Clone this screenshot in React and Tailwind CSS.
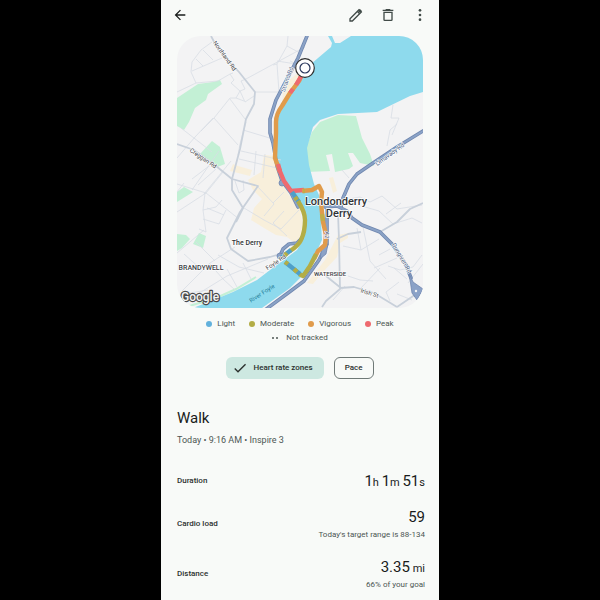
import React from "react";

const zones = [
  { label: "Light", color: "bg-[#62b1dc]" },
  { label: "Moderate", color: "bg-[#b3ad46]" },
  { label: "Vigorous", color: "bg-[#e09b4b]" },
  { label: "Peak", color: "bg-[#ee6a6f]" },
];

const minorRoads = [
  "M177 92L196 83L218 81L230 74L233 73M196 83L191 72L192 62L201 50L212 42M192 71L222 58M196 59L203 66M203 50L213 60M230 74L234 80L231 83L240 91L245 89L241 81L246 79L305 47M273 65L277 64L279 92L255 92M277 64L287 46L288 36M287 46L300 53M277 61L296 64M240 91L236 98L230 98L214 118L201 131M240 91L245 102L254 96M244 101L236 98M230 99L245 119M214 118L238 145",
  "M181 128L212 152M177 158L195 137L213 118M192 190L219 151M204 194L231 161M184 183L177 192M192 179L213 163M198 185L216 169M206 193L177 184M206 193L223 172M206 193L239 219M205 193L203 210L216 207L222 200M203 219L219 224L226 210M207 208L224 215M177 212L206 193M246 122L240 144L238 155M243 130L273 139M241 151L281 160M239 159L277 168M256 151L254 175M265 154L263 178M235 181L239 193L244 190L243 180M244 208L264 220L281 229L299 210M258 187L274 204L264 216M273 203L284 192M284 211L273 223L287 236",
  "M203 210L206 232L199 229M177 253L204 230M182 291L210 263L235 247M209 263L223 279L235 290M218 255L239 267L264 273M227 269L237 287M243 263L251 279M184 254L202 270M196 242L215 261M183 294L208 290M188 300L227 276L268 259",
  "M392 135L399 118L391 118L393 105M387 146L390 130L397 124M342 170L349 178M344 200L360 197L370 202L382 196L397 209L422 205M358 205L379 211L393 224L412 218L422 223M386 214L401 203M357 228L361 250L343 246M361 250L379 239M363 227L370 261L386 279M379 255L390 249M374 268L397 258M360 289L380 268M348 276L360 280L373 281M333 300L345 286M388 266L400 270L413 267L422 255M399 282L386 292L390 301M407 279L394 268M397 294L412 300M290 61L299 65M423 264L408 283",
];

const roads = [
  "M211 36L219 51L239 72L255 92L254 104L246 119L240 149L232 179L232 190L243 208L236 222",
  "M177 144L194 150L216 166L232 179L258 186L240 212L227 238L231 249L248 261L270 257L284 253",
  "M338 213L339 240L340 289L326 301L322 307",
  "M340 288L354 287L374 293L397 307M397 307L422 290M380 232L397 222L410 209L423 203",
  "M326 276L341 288M337 239L348 234L361 232",
];

const highways = [
  "M307 36L298 58L286 81L276 100L270 119L270 133L273 143L277 166L282 181L291 193L298 207",
  "M423 131L397 147L373 163L357 174L349 184L343 198L341 207",
  "M325 207L337 206L347 211L352 218L362 225L380 232L393 245L406 265L411 278",
  "M327 207L327 244L319 260L304 281L288 293L265 310",
  "M302 238L297 243L289 244L283 249L280 256",
];

function RouteMap() {
  return (
    <svg
      viewBox="177 36 246 272"
      role="img"
      aria-label="Route map"
      className="block w-full rounded-[24px] bg-[#f3f3f4] font-['Roboto',sans-serif]"
    >
      {/* parks */}
      <g fill="#c3f0d5">
        <path d="M177 98L198 84L213 82L220 80L222 84L208 94L206 100L195 108L189 122L184 130L177 126Z" />
        <path d="M200 154L212 141L220 147L225 164L215 168Z" />
        <path d="M177 192L184 187L193 192L177 202Z" />
        <path d="M177 234L186 235L190 239L182 248L177 251Z" />
        <path d="M193 244L199 233L206 236L203 248Z" />
        <path d="M306 172L306 148L312 132L320 122L338 115L356 116L362 138L370 154L374 166L360 163L353 153L348 153L353 166L349 169L335 172L332 154L326 155L330 171Z" />
      </g>
      <path
        d="M186 307L216 298L236 289L256 277"
        fill="none"
        stroke="#c3f0d5"
        strokeWidth="2"
      />
      {/* commercial areas */}
      <g fill="#f8efdb">
        <path d="M233 164L238 166L252 170L250 176L238 173L230 171Z" />
        <path d="M264 155L275 156L280 178L289 195L300 209L304 232L295 243L287 237L276 235L264 228L251 220L254 208L262 199L253 190L248 180L261 172Z" />
        <path d="M283 85L304 68L307 74L296 93L282 112Z" />
        <path d="M329 178L333 177L337 191L333 193Z" />
        <path d="M338 235L348 233L348 238L340 243L337 257L322 273L313 284L307 283L325 260Z" />
      </g>
      {/* river */}
      <path
        fill="#8edaed"
        d="M328 36L332 36L335 43L340 43L351 36L423 36L423 92L410 96L377 112L338 114L320 120L313 127L307 148L309 165L314 184L319 195L321 220L322 240L316 253L307 271L290 288L262 308L193 308L216 299L233 292L257 280L270 270L285 259L297 250L303 240L305 226L302 211L292 193L283 182L277 166L275 145L276 122L283 106L300 82L311 64L331 47L332 43Z"
      />

      <g fill="none" stroke="#d8dde5" strokeWidth="0.8" strokeLinejoin="round">
        {minorRoads.map((d, idx) => (
          <path key={idx} d={d} />
        ))}
      </g>
      <g fill="none" stroke="#c8d0da" strokeWidth="1.8" strokeLinejoin="round">
        {roads.map((d, idx) => (
          <path key={idx} d={d} />
        ))}
      </g>
      <g fill="none" strokeLinejoin="round" strokeLinecap="round">
        {highways.map((d, idx) => (
          <path key={idx} d={d} stroke="#7087af" strokeWidth="3.6" />
        ))}
        {highways.map((d, idx) => (
          <path key={idx} d={d} stroke="#8aa2c6" strokeWidth="2" />
        ))}
      </g>
      <g fill="#8ba2c7" stroke="#7087af" strokeWidth="0.8">
        <path d="M409 273L413 282L423 289L417 300L412 293Z" />
        <circle cx="282" cy="183" r="3" />
        <circle cx="280" cy="256" r="3" />
        <path d="M322 246L328 244L326 254L320 259Z" />
      </g>
      <circle cx="416" cy="291" r="1.2" fill="#f3f3f4" />

      {/* tracked route, coloured by heart rate zone */}
      <g
        fill="none"
        strokeWidth="4.4"
        strokeLinejoin="round"
        strokeLinecap="butt"
      >
        <path
          stroke="#e09b4b"
          d="M304 70L299 81L290 93L282 106Q276 114 276 122L276 133L275 158L280 172"
        />
        <path stroke="#ee6a6f" d="M303 73L296 85M293 89L290 93M278 164L280 171" />
        <path stroke="#ee6a6f" d="M279 169L284 181L291 191L304 190" />
        <path
          stroke="#e09b4b"
          d="M302 191L312 190L319 186L322 192L321 203L323 222L326 235L325 245L318 251L314 259"
        />
        <path stroke="#c1ad48" d="M303 191L305 191M322 214L323 221" />
        <path stroke="#b3ad46" d="M316 254Q311 266 303 276L299 274" />
        <path stroke="#4f9fc8" d="M292 192L299 202M300 274L285 262" />
        <path stroke="#b3ad46" d="M285 262L288 264M294 269L297 272M295 197L297 200" />
        <path
          stroke="#b3ad46"
          d="M298 201Q305 212 305 220Q305 232 301 240Q298 246 290 251"
        />
        <path stroke="#4f9fc8" d="M291 250L281 258" />
        <path stroke="#b3ad46" d="M287 253L284 256" />
      </g>
      <circle cx="305" cy="68" r="9.3" fill="#fff" stroke="#303030" strokeWidth="1.2" />
      <circle cx="305" cy="68" r="5" fill="#fff" stroke="#29375c" strokeWidth="1.2" />

      {/* labels */}
      <g
        fill="#3d4246"
        stroke="#fff"
        strokeWidth="1.2"
        strokeLinejoin="round"
        paintOrder="stroke"
        textAnchor="middle"
        fontSize="6"
      >
        <text transform="translate(223 57) rotate(54)">Northland Rd</text>
        <text transform="translate(289 80) rotate(-71)" fill="#54698c">
          Strand Rd
        </text>
        <text transform="translate(202 160) rotate(34)">Creggan Rd</text>
        <text transform="translate(391 156) rotate(-36)" fill="#43577c">
          Limavady Rd
        </text>
        <text transform="translate(277 264) rotate(-34)">Foyle Rd</text>
        <text transform="translate(400 259) rotate(60)" fill="#43577c">
          Dungiven Rd
        </text>
        <text transform="translate(369 295) rotate(17)">Irish St</text>
        <text transform="translate(325 235) rotate(90)" fill="#43577c">
          A2
        </text>
        <text
          transform="translate(263 295) rotate(-33)"
          fill="#257f9b"
          stroke="none"
        >
          River Foyle
        </text>
        <g fontSize="11" fontWeight="500" fill="#303336" strokeWidth="1.6">
          <text x="336" y="205">
            Londonderry
          </text>
          <text x="339" y="217">
            Derry
          </text>
        </g>
        <g fontWeight="500">
          <text x="247" y="245" fontSize="7" fill="#303336">
            The Derry
          </text>
          <text x="201" y="270" fontSize="7">
            BRANDYWELL
          </text>
          <text x="330" y="276">
            WATERSIDE
          </text>
        </g>
      </g>
      <text
        x="181"
        y="301"
        fontSize="12"
        fontWeight="500"
        fill="#f4f4f4"
        stroke="#4a4a4a"
        strokeWidth="2.4"
        strokeLinejoin="round"
        paintOrder="stroke"
      >
        Google
      </text>
    </svg>
  );
}

function TopBar() {
  return (
    <header className="flex items-center px-[11px] py-[7px] text-[#414b48]">
      <button aria-label="Back" className="text-[#191c1b]">
        <svg viewBox="0 0 24 24" className="h-4 w-4" fill="currentColor">
          <path d="M20 11H7.8l5.6-5.6L12 4l-8 8 8 8 1.4-1.4L7.8 13H20z" />
        </svg>
      </button>
      <div className="ml-auto flex gap-4">
        <button aria-label="Edit">
          <svg
            viewBox="0 0 24 24"
            className="h-4 w-4"
            fill="none"
            stroke="currentColor"
            strokeWidth="2"
          >
            <path d="M3 21v-3.500L16.500 4l3.500 3.500L6.500 21z" />
            <path d="M14 6.500l3.500 3.500" />
            <path d="M16.500 4.500l3 3" strokeWidth="4" />
          </svg>
        </button>
        <button aria-label="Delete">
          <svg viewBox="0 0 24 24" className="h-4 w-4" fill="currentColor">
            <path
              d="M15 3l1 1h4v2H4V4h4l1-1zM5 7h14v12a2 2 0 0 1-2 2H7a2 2 0 0 1-2-2zm2 2v10h10V9z"
              fillRule="evenodd"
            />
          </svg>
        </button>
        <button aria-label="More options">
          <svg viewBox="0 0 24 24" className="h-4 w-4" fill="currentColor">
            <circle cx="12" cy="5" r="2" />
            <circle cx="12" cy="12" r="2" />
            <circle cx="12" cy="19" r="2" />
          </svg>
        </button>
      </div>
    </header>
  );
}

// Large digits with small units, e.g. 1h 1m 51s
function Amount({ parts }) {
  return parts.map(([value, unit]) => (
    <React.Fragment key={unit}>
      {value}
      <span className="text-[11px] leading-none">{unit}</span>
    </React.Fragment>
  ));
}

function Stat({ label, note, children }) {
  return (
    <div className="flex items-center justify-between">
      <dt className="text-[8px] font-medium text-[#2b302e]">{label}</dt>
      <dd className="text-right">
        <p className="text-[15px] leading-5 text-[#191c1b]">{children}</p>
        {note && (
          <p className="mt-0.5 text-[8px] leading-3 text-[#4c5653]">{note}</p>
        )}
      </dd>
    </div>
  );
}

export default function App() {
  return (
    <div className="flex min-h-screen justify-center bg-black">
      <div className="w-full max-w-[278px] bg-[#f8faf8] font-['Roboto',sans-serif]">
        <TopBar />
        <main className="px-4 pt-1.5 pb-2">
          <RouteMap />

          <ul className="mt-[9px] flex flex-wrap justify-center gap-x-3.5 text-[8px] leading-[14px] text-[#4c5653]">
            {zones.map((zone) => (
              <li key={zone.label} className="flex items-center gap-[5px]">
                <span className={`h-1.5 w-1.5 rounded-full ${zone.color}`} />
                {zone.label}
              </li>
            ))}
            <li className="flex w-full items-center justify-center gap-2">
              <span className="flex gap-0.5">
                <span className="h-0.5 w-0.5 rounded-full bg-[#4c5653]" />
                <span className="h-0.5 w-0.5 rounded-full bg-[#4c5653]" />
              </span>
              Not tracked
            </li>
          </ul>

          <div className="mt-3 flex justify-center gap-2.5 text-[8px] font-medium text-[#2b302e]">
            <button
              aria-pressed="true"
              className="flex h-[22px] items-center gap-[5px] rounded-md bg-[#cde8e1] pr-[11px] pl-1.5"
            >
              <svg viewBox="0 0 24 24" className="h-4 w-4" fill="currentColor">
                <path d="M9 16.200l-4.200-4.200-1.400 1.400L9 19 21 7l-1.400-1.400z" />
              </svg>
              Heart rate zones
            </button>
            <button
              aria-pressed="false"
              className="h-[22px] rounded-md border border-[#6f7977] px-2.5"
            >
              Pace
            </button>
          </div>

          <h1 className="mt-[27px] text-[15px] leading-6 text-[#191c1b]">
            Walk
          </h1>
          <p className="mt-0.5 text-[9px] leading-4 text-[#4c5653]">
            Today • 9:16 AM • Inspire 3
          </p>

          <dl className="-mr-0.5 mt-[23px] flex flex-col gap-4">
            <Stat label="Duration">
              <Amount
                parts={[
                  ["1", "h "],
                  ["1", "m "],
                  ["51", "s"],
                ]}
              />
            </Stat>
            <Stat label="Cardio load" note="Today's target range is 88-134">
              59
            </Stat>
            <Stat label="Distance" note="66% of your goal">
              <Amount parts={[["3.35", " mi"]]} />
            </Stat>
          </dl>
        </main>
      </div>
    </div>
  );
}
